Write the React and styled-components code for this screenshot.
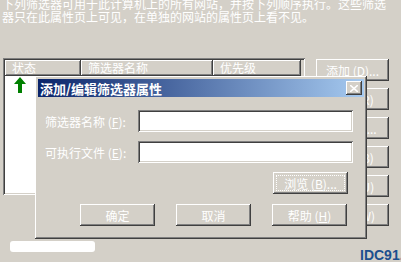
import React from 'react';
import styled, { createGlobalStyle } from 'styled-components';

const GlobalStyle = createGlobalStyle`
  html, body {
    margin: 0;
    padding: 0;
    background: #d4d0c8;
  }
  body {
    font-family: "Noto Sans CJK SC", "Liberation Sans", sans-serif;
    font-size: 12px;
  }
`;

const raised = `
  box-shadow: inset -1px -1px 0 #404040, inset 1px 1px 0 #ffffff,
    inset -2px -2px 0 #808080, inset 2px 2px 0 #d4d0c8;
`;

const sunken = `
  box-shadow: inset 1px 1px 0 #808080, inset -1px -1px 0 #ffffff,
    inset 2px 2px 0 #404040, inset -2px -2px 0 #d4d0c8;
`;

const Page = styled.div`
  position: relative;
  width: 401px;
  height: 262px;
  overflow: hidden;
  background: #d4d0c8;
  color: #ffffff;
`;

const Intro = styled.p`
  margin: -3px 0 0 2px;
  width: 396px;
  line-height: 13px;
  white-space: pre-line;
`;

const MainRow = styled.div`
  display: flex;
  align-items: flex-start;
  margin-top: 35px;
  padding-left: 3px;
`;

const ListView = styled.div`
  width: 302px;
  height: 137px;
  box-sizing: border-box;
  padding: 2px;
  ${sunken};
  display: flex;
  flex-direction: column;
`;

const HeaderRow = styled.div`
  display: flex;
  height: 16px;
  background: #d4d0c8;
`;

const HeaderCell = styled.div`
  width: ${p => p.$w}px;
  box-sizing: border-box;
  padding-left: 7px;
  line-height: 16px;
  box-shadow: inset -1px -1px 0 #404040, inset 1px 1px 0 #ffffff,
    inset -2px -2px 0 #808080;
`;

const ListBody = styled.div`
  flex: 1;
  background: #ffffff;
  padding: 1px 0 0 9px;
`;

const ButtonColumn = styled.div`
  display: flex;
  flex-direction: column;
  gap: 7px;
  margin: 1px 0 0 11px;
`;

const WinButton = styled.button`
  width: ${p => p.$w || 75}px;
  height: 22px;
  padding: 0;
  border: none;
  background: #d4d0c8;
  color: #ffffff;
  font: inherit;
  font-size: 12px;
  white-space: nowrap;
  ${raised};
  position: relative;
`;

const FocusRing = styled.span`
  position: absolute;
  inset: 3px;
  border: 1px dotted #ffffff;
  pointer-events: none;
`;

const Footer = styled.div`
  display: flex;
  align-items: flex-start;
  margin-top: 15px;
  padding-left: 10px;
`;

const Pill = styled.div`
  width: 85px;
  height: 11px;
  border-radius: 3px;
  background: #ffffff;
`;

const Watermark = styled.div`
  margin: 7px 0 0 auto;
  width: 41px;
  white-space: nowrap;
  font-family: "Liberation Sans", Arial, sans-serif;
  font-weight: bold;
  font-size: 14px;
  line-height: 14px;
  color: #1c4f8e;
`;

const Dialog = styled.div`
  position: absolute;
  left: 35px;
  top: 76px;
  width: 332px;
  height: 163px;
  box-sizing: border-box;
  padding: 3px;
  background: #d4d0c8;
  ${raised};
  display: flex;
  flex-direction: column;
`;

const TitleBar = styled.div`
  height: 18px;
  display: flex;
  align-items: center;
  padding: 0 2px 0 2px;
  background: linear-gradient(to right, #0a246a, #a6caf0);
`;

const Title = styled.span`
  flex: 1;
  font-weight: bold;
  font-size: 13px;
  color: #ffffff;
`;

const CloseButton = styled.div`
  width: 16px;
  height: 14px;
  background: #d4d0c8;
  ${raised};
  display: flex;
  align-items: center;
  justify-content: center;
`;

const DialogBody = styled.div`
  padding: 13px 10px 0 7px;
  display: flex;
  flex-direction: column;
`;

const FieldRow = styled.div`
  display: flex;
  align-items: center;
  margin-bottom: 9px;
`;

const Label = styled.label`
  width: 93px;
  white-space: nowrap;
`;

const TextBox = styled.div`
  width: 215px;
  height: 22px;
  background: #ffffff;
  ${sunken};
`;

const BrowseRow = styled.div`
  display: flex;
  justify-content: flex-end;
  padding-right: 6px;
`;

const ActionRow = styled.div`
  display: flex;
  gap: 21px;
  margin: 10px 0 0 35px;
`;

const Mn = styled.span`
  text-decoration: underline;
`;

const UpArrow = () => (
  <svg width="12" height="16" viewBox="0 0 12 16">
    <path d="M6 0 L12 7 L8 7 L8 16 L4 16 L4 7 L0 7 Z" fill="#008000" />
  </svg>
);

const CloseGlyph = () => (
  <svg width="8" height="7" viewBox="0 0 8 7">
    <path d="M0 0 L8 7 M8 0 L0 7" stroke="#ffffff" strokeWidth="1.6" />
  </svg>
);

const sideButtons = ['添加 (D)...', '删除 (R)', '编辑 (I)...', '禁用 (B)', '上移 (U)', '下移 (W)'];

export default function App() {
  return (
    <Page>
      <GlobalStyle />
      <Intro>
        {'下列筛选器可用于此计算机上的所有网站，并按下列顺序执行。这些筛选\n器只在此属性页上可见，在单独的网站的属性页上看不见。'}
      </Intro>

      <MainRow>
        <ListView>
          <HeaderRow>
            <HeaderCell $w={76}>状态</HeaderCell>
            <HeaderCell $w={132}>筛选器名称</HeaderCell>
            <HeaderCell $w={88}>优先级</HeaderCell>
          </HeaderRow>
          <ListBody>
            <UpArrow />
          </ListBody>
        </ListView>

        <ButtonColumn>
          {sideButtons.map(label => (
            <WinButton key={label} $w={73}>{label}</WinButton>
          ))}
        </ButtonColumn>
      </MainRow>

      <Footer>
        <Pill />
        <Watermark>IDC91.</Watermark>
      </Footer>

      <Dialog>
        <TitleBar>
          <Title>添加/编辑筛选器属性</Title>
          <CloseButton>
            <CloseGlyph />
          </CloseButton>
        </TitleBar>
        <DialogBody>
          <FieldRow>
            <Label>筛选器名称 (<Mn>F</Mn>):</Label>
            <TextBox />
          </FieldRow>
          <FieldRow>
            <Label>可执行文件 (<Mn>E</Mn>):</Label>
            <TextBox />
          </FieldRow>
          <BrowseRow>
            <WinButton>
              <FocusRing />
              浏览 (<Mn>B</Mn>)...
            </WinButton>
          </BrowseRow>
          <ActionRow>
            <WinButton>确定</WinButton>
            <WinButton>取消</WinButton>
            <WinButton>帮助 (<Mn>H</Mn>)</WinButton>
          </ActionRow>
        </DialogBody>
      </Dialog>
    </Page>
  );
}
